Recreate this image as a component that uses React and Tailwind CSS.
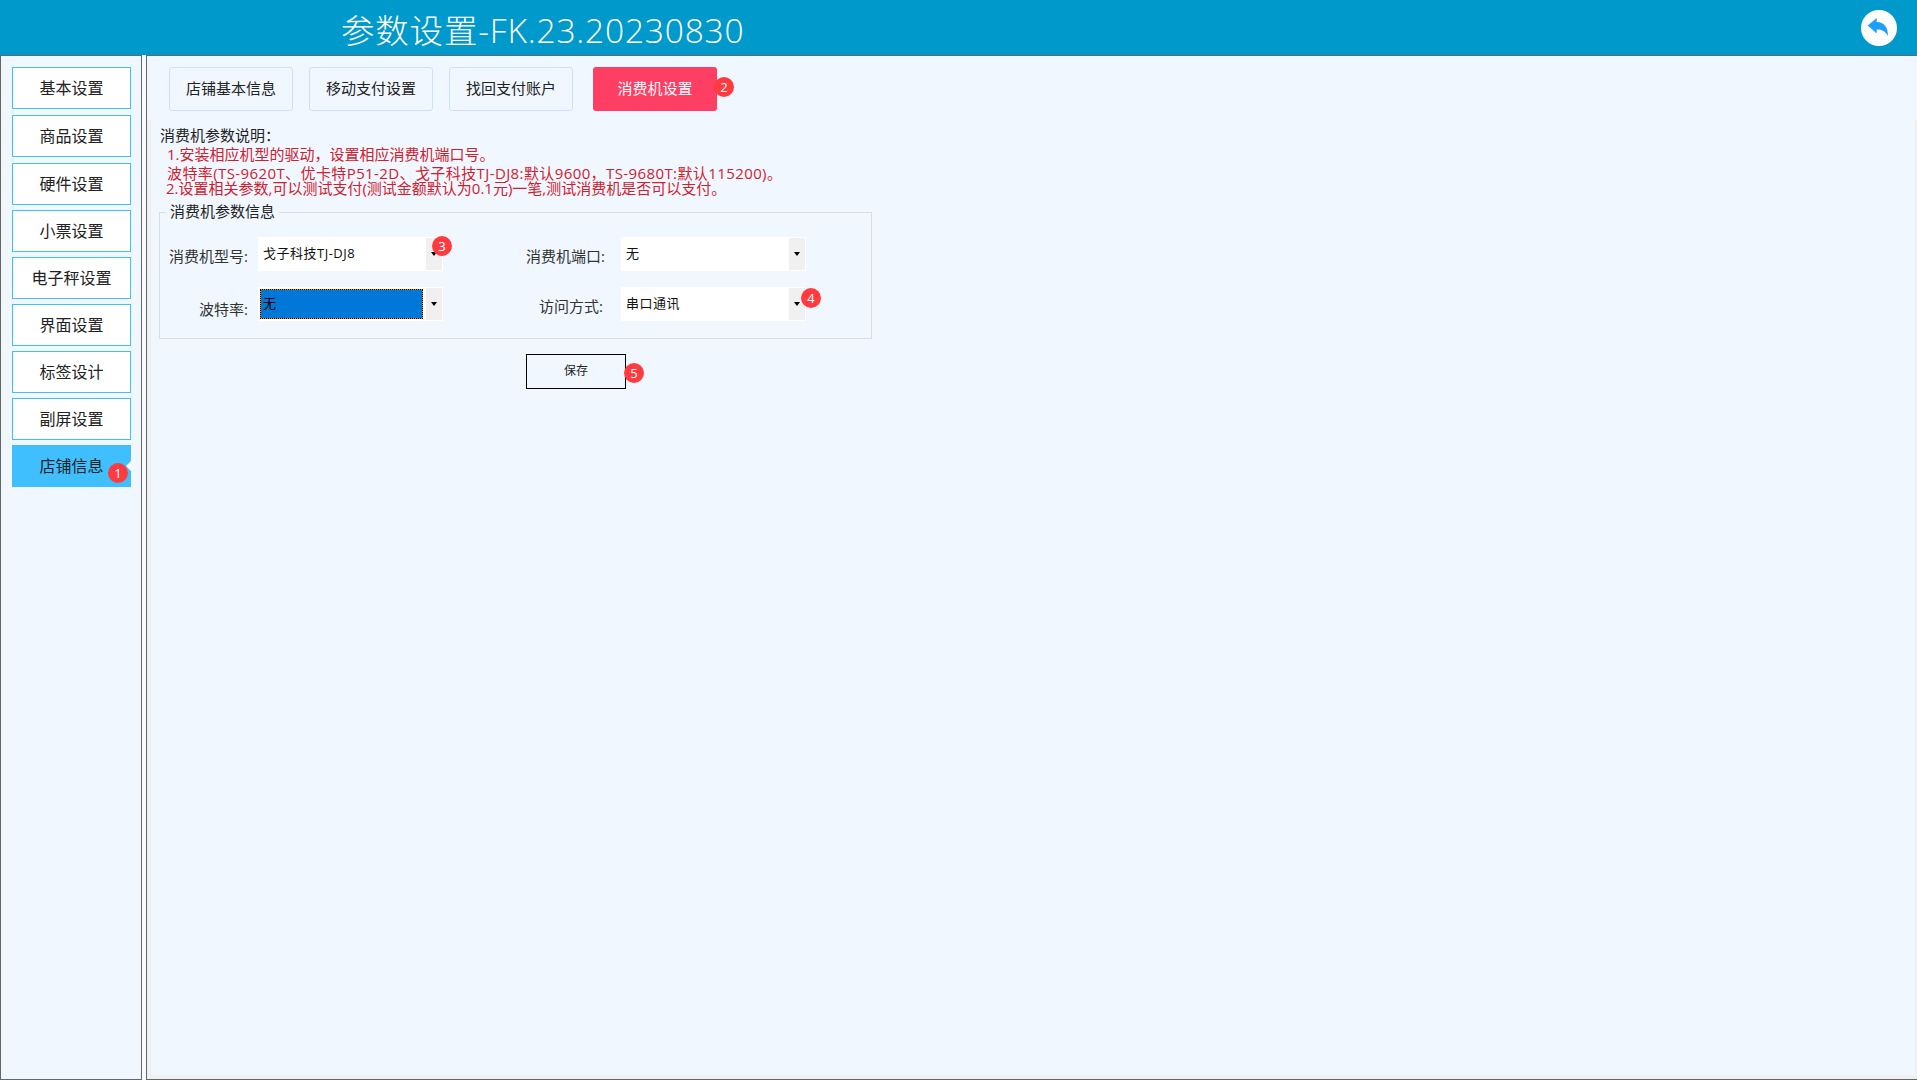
const menuItems = [
  { name: '基本设置', cls: 'mb-px' },
  { name: '商品设置', cls: 'mb-px' },
  { name: '硬件设置' },
  { name: '小票设置' },
  { name: '电子秤设置' },
  { name: '界面设置' },
  { name: '标签设计' },
  { name: '副屏设置' },
];

const tabs = ['店铺基本信息', '移动支付设置', '找回支付账户'];

const Badge = ({ n, className }) => (
  <span className={`absolute w-5 h-5 rounded-full bg-[#ff3b3f] text-white text-[13px] leading-5 text-center ${className}`}>
    {n}
  </span>
);

const Arrow = () => (
  <span className="w-0 h-0 border-x-[3.5px] border-x-transparent border-t-[4px] border-t-black" />
);

const SelectBox = ({ value, active, children }) => (
  <div className="relative w-[185px] h-[34px] bg-white flex items-center shrink-0">
    {active ? (
      <div className="ml-[3px] w-[161px] h-[28px] bg-[#0078d7] shadow-[0_0_0_1px_#e08a20] outline-1 outline-dotted outline-black pl-[2px] text-[13px] leading-[26px] text-black">
        {value}
      </div>
    ) : (
      <div className="pl-[5px] w-[168px] text-[13px] tracking-[0.5px] leading-[26px] text-[#111] -mt-[2px]">{value}</div>
    )}
    <div className="absolute right-px top-px bottom-px w-[16px] bg-[#f0f0f0] flex items-center justify-center">
      <Arrow />
    </div>
    {children}
  </div>
);

const App = () => {
  return (
    <div className="h-screen w-full flex flex-col overflow-hidden bg-[#f8fbff] text-[15px] text-[#222]" style={{ fontFamily: '"Open Sans", "Noto Sans CJK SC", sans-serif' }}>
      {/* Header */}
      <div className="h-[55px] shrink-0 bg-[#0099cc] flex items-center justify-between pl-[341px] pr-5">
        <span className="mt-[6px] text-white text-[33.5px] tracking-[0.8px] leading-none font-light">参数设置-FK.23.20230830</span>
        <button className="w-9 h-9 rounded-full bg-white flex items-center justify-center">
          <svg viewBox="0 0 36 36" className="w-9 h-9">
            <path d="M6.7 15.5 L15.7 8 V12 C23 12 27 17 27 26 C24 21 21 19.5 15.7 19.5 V23.5 Z" fill="#1e9fff" />
          </svg>
        </button>
      </div>

      <div className="flex-1 flex min-h-0">
        {/* Sidebar */}
        <div className="w-[142px] shrink-0 bg-[#f0f7ff] border border-[#666] pt-[11px] pl-[11px] flex flex-col gap-[5px] text-[16px]">
          {menuItems.map((item) => (
            <button key={item.name} className={`w-[119px] h-[42px] shrink-0 bg-white border border-[#40bfff] ${item.cls || ''}`}>
              {item.name}
            </button>
          ))}
          <button className="relative w-[119px] h-[42px] shrink-0 bg-[#40bfff]">
            店铺信息
            <Badge n="1" className="left-[96px] top-[18px]" />
            <span className="absolute right-0 top-[16px] w-0 h-0 border-y-[5px] border-y-transparent border-r-[5px] border-r-white" />
          </button>
        </div>

        {/* Main */}
        <div className="ml-[4px] flex-1 flex flex-col min-w-0 bg-[#f0f7ff] border-l border-t border-b border-[#666]">
          <div className="h-[64px] shrink-0 flex pt-[11px] pl-[22px] gap-[16px]">
            {tabs.map((tab) => (
              <button key={tab} className="w-[124px] h-[44px] pb-[2px] bg-[#f0f7ff] border border-[#cfe0fa] rounded-[3px]">
                {tab}
              </button>
            ))}
            <button className="relative ml-[4px] w-[124px] h-[44px] pb-[2px] bg-[#ff3e63] text-white rounded-[3px]">
              消费机设置
              <Badge n="2" className="left-[121px] top-[10px]" />
            </button>
          </div>

          <div className="flex-1 min-h-0 border-l-4 border-r-2 border-b-4 border-[#f0f0f0] pl-[8px]">
            <div className="leading-[18px] pt-[6px]">
              <p className="pl-px">消费机参数说明：</p>
              <p className="pl-[8px] text-[#d0202e] mt-px">1.安装相应机型的驱动，设置相应消费机端口号。</p>
              <p className="pl-[8px] text-[#d0202e] tracking-[0.4px] mt-[1px]">波特率(TS-9620T、优卡特P51-2D、戈子科技TJ-DJ8:默认9600，TS-9680T:默认115200)。</p>
              <p className="pl-[7px] text-[#d0202e] -mt-[3px]">2.设置相关参数,可以测试支付(测试金额默认为0.1元)一笔,测试消费机是否可以支付。</p>
            </div>

            <fieldset className="mt-[5px] w-[713px] h-[137px] border border-[#dcdcdc]">
              <legend className="px-[4px] pb-[2px] ml-[6px] leading-[18px]">消费机参数信息</legend>
              <div className="flex flex-col gap-[16px] pt-[15px]">
                <div className="flex">
                  <div className="w-[88px] text-right mr-[10px] pt-[9px] leading-[20px] text-[#333] shrink-0 whitespace-nowrap">消费机型号:</div>
                  <SelectBox value="戈子科技TJ-DJ8">
                    <Badge n="3" className="left-[174px] top-[-1px]" />
                  </SelectBox>
                  <div className="w-[162px] text-right mr-[16px] pt-[9px] leading-[20px] text-[#333] shrink-0 whitespace-nowrap">消费机端口:</div>
                  <SelectBox value="无" />
                </div>
                <div className="flex">
                  <div className="w-[88px] text-right mr-[10px] pt-[12px] leading-[20px] text-[#333] shrink-0 whitespace-nowrap">波特率:</div>
                  <SelectBox value="无" active />
                  <div className="w-[160px] text-right mr-[18px] pt-[9px] leading-[20px] text-[#333] shrink-0 whitespace-nowrap">访问方式:</div>
                  <SelectBox value="串口通讯">
                    <Badge n="4" className="left-[180px] top-[1px]" />
                  </SelectBox>
                </div>
              </div>
            </fieldset>

            <button className="relative block mt-[15px] ml-[367px] w-[100px] h-[35px] pb-[2px] border border-black text-[12px]">
              保存
              <Badge n="5" className="left-[97px] top-[8px]" />
            </button>
          </div>
        </div>
      </div>
    </div>
  );
};

export default App;
